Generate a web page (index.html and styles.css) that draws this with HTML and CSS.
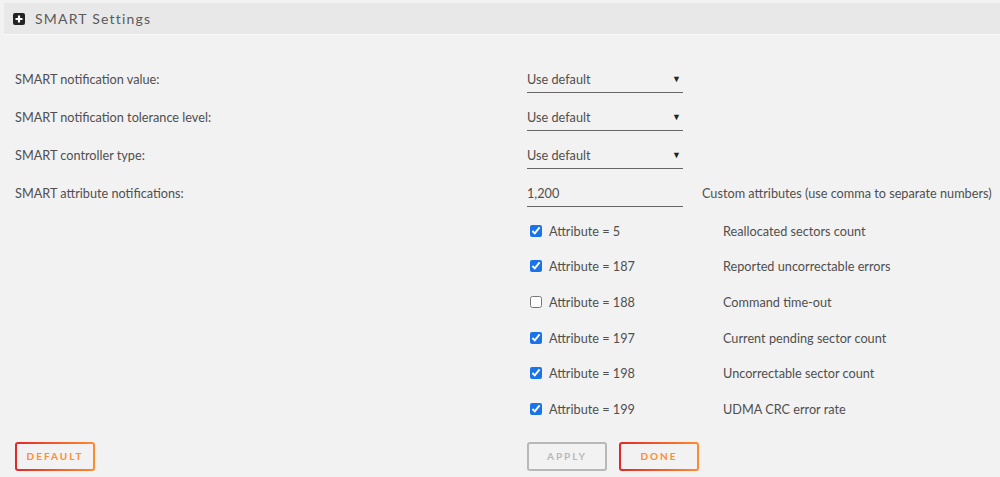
FILE: index.html
```html
<!DOCTYPE html>
<html lang="en">
<head>
  <meta charset="UTF-8">
  <title>SMART Settings</title>
  <link rel="stylesheet" href="styles.css">
</head>
<body>
  <div class="title">
    <span class="plus"><svg width="12" height="12" viewBox="0 0 12 12"><rect x="0" y="0" width="12" height="12" rx="2" fill="#222"/><path d="M6 2.5v7M2.5 6h7" stroke="#fff" stroke-width="2.2"/></svg></span>
    <span class="title-text">SMART Settings</span>
  </div>

  <form class="settings">
    <div class="row">
      <div class="label">SMART notification value:</div>
      <div class="field"><div class="select">Use default<span class="caret">&#9660;</span></div></div>
    </div>
    <div class="row">
      <div class="label">SMART notification tolerance level:</div>
      <div class="field"><div class="select">Use default<span class="caret">&#9660;</span></div></div>
    </div>
    <div class="row">
      <div class="label">SMART controller type:</div>
      <div class="field"><div class="select">Use default<span class="caret">&#9660;</span></div></div>
    </div>
    <div class="row">
      <div class="label">SMART attribute notifications:</div>
      <div class="field">
        <div class="select">1,200</div>
        <span class="hint">Custom attributes (use comma to separate numbers)</span>
      </div>
    </div>

    <div class="attrs">
      <label class="attr"><input type="checkbox" checked><span class="name">Attribute = 5</span><span class="desc">Reallocated sectors count</span></label>
      <label class="attr"><input type="checkbox" checked><span class="name">Attribute = 187</span><span class="desc">Reported uncorrectable errors</span></label>
      <label class="attr"><input type="checkbox"><span class="name">Attribute = 188</span><span class="desc">Command time-out</span></label>
      <label class="attr"><input type="checkbox" checked><span class="name">Attribute = 197</span><span class="desc">Current pending sector count</span></label>
      <label class="attr"><input type="checkbox" checked><span class="name">Attribute = 198</span><span class="desc">Uncorrectable sector count</span></label>
      <label class="attr"><input type="checkbox" checked><span class="name">Attribute = 199</span><span class="desc">UDMA CRC error rate</span></label>
    </div>

    <div class="buttons">
      <div class="label"><button type="button" class="btn">Default</button></div>
      <div class="field">
        <button type="button" class="btn disabled">Apply</button>
        <button type="button" class="btn">Done</button>
      </div>
    </div>
  </form>
</body>
</html>
```

FILE: styles.css
```css
body {
  margin: 0;
  background: #f2f2f2;
  color: #4f4f4f;
  font-family: Lato, "Open Sans", sans-serif;
  font-size: 12.7px;
  height: 477px;
  overflow: hidden;
}
.title {
  margin: 3px 0 0 4px;
  height: 31px;
  background: #e8e8e8;
  border-bottom: 1px solid #f8f8f8;
  display: flex;
  align-items: center;
  padding-left: 9px;
}
.plus {
  display: flex;
  margin-right: 10px;
}
.title-text {
  font-size: 14px;
  letter-spacing: 1.2px;
  color: #5a5a5a;
}
.settings {
  padding: 26px 0 0 15px;
}
.row {
  display: flex;
  height: 38px;
}
.label {
  width: 512px;
  padding-top: 10px;
}
.field {
  display: flex;
  align-items: flex-start;
}
.select {
  width: 156px;
  height: 32px;
  box-sizing: border-box;
  padding: 10px 0 0 0;
  border-bottom: 1px solid #666;
  position: relative;
}
.caret {
  position: absolute;
  right: 2px;
  top: 12px;
  font-size: 9px;
  color: #222;
}
.hint {
  margin-left: 19px;
  padding-top: 10px;
}
.attrs {
  margin: 0 0 0 512px;
}
.attr {
  display: flex;
  align-items: center;
  height: 35.6px;
}
.attr input {
  width: 12px;
  height: 12px;
  margin: 0 7px 0 3px;
  accent-color: #1a73e8;
}
.name {
  width: 174px;
}
.buttons {
  display: flex;
  margin-top: 15px;
}
.buttons .label {
  padding-top: 0;
}
.btn {
  width: 80px;
  height: 29px;
  border: 2px solid transparent;
  border-radius: 3px;
  background-image: linear-gradient(#f2f2f2, #f2f2f2), linear-gradient(90deg, #e22828, #ff8c2f);
  background-origin: border-box;
  background-clip: padding-box, border-box;
  color: #ff8c2f;
  font-family: Lato, sans-serif;
  font-weight: bold;
  font-size: 10px;
  letter-spacing: 2px;
  text-transform: uppercase;
  margin-right: 8px;
}
.btn.disabled {
  background-image: linear-gradient(#f2f2f2, #f2f2f2), linear-gradient(#b8b8b8, #b8b8b8);
  color: #b8b8b8;
  margin-right: 12px;
}
```
